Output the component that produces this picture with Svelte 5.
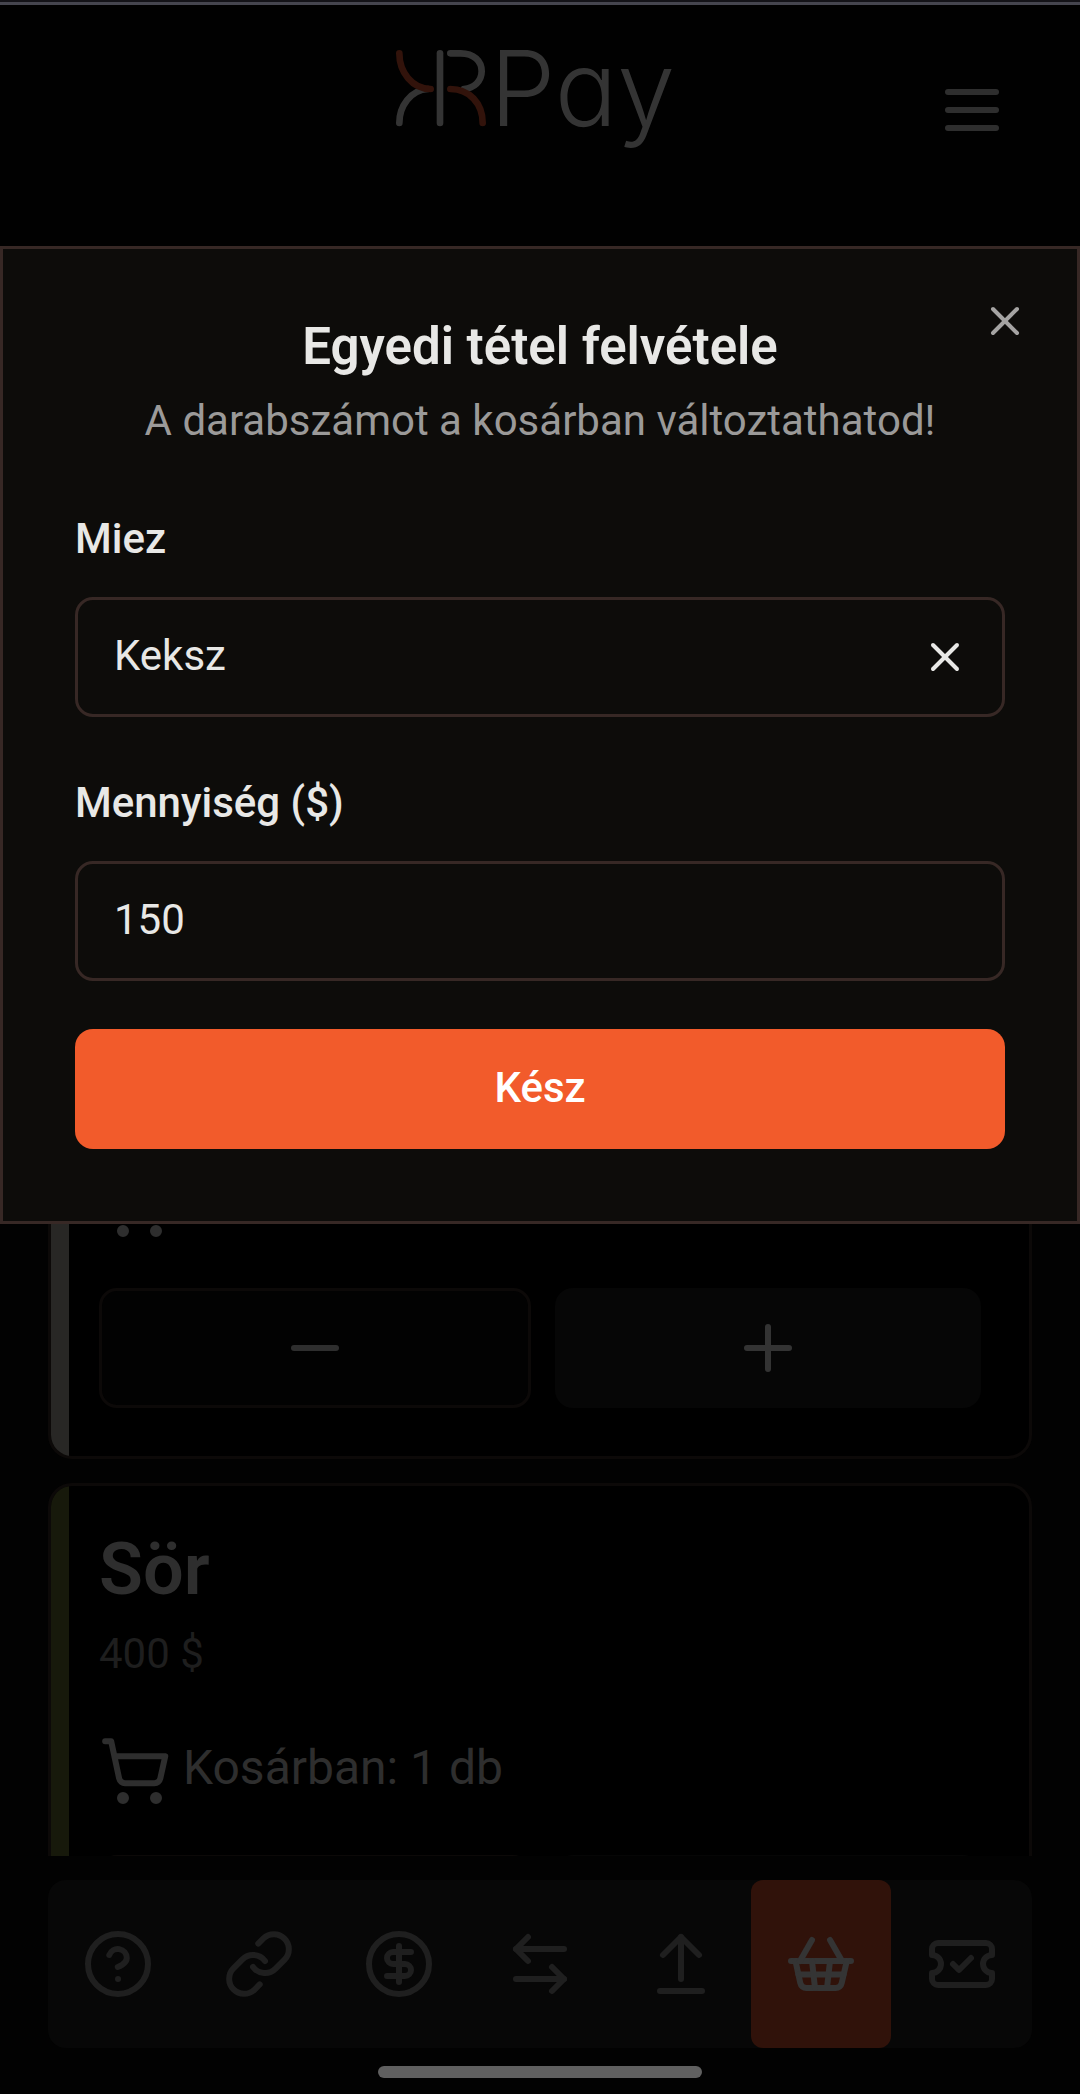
<script>
  let itemName = $state('Keksz');
  let amount = $state('150');

  const navItems = [
    {
      label: 'Súgó',
      paths: ['M2 12a10 10 0 1 0 20 0a10 10 0 1 0-20 0', 'M9.09 9a3 3 0 0 1 5.83 1c0 2-3 3-3 3', 'M12 17h.01']
    },
    {
      label: 'Összekapcsolás',
      paths: [
        'M10 13a5 5 0 0 0 7.54.54l3-3a5 5 0 0 0-7.07-7.07l-1.72 1.71',
        'M14 11a5 5 0 0 0-7.54-.54l-3 3a5 5 0 0 0 7.07 7.07l1.71-1.71'
      ]
    },
    {
      label: 'Egyenleg',
      paths: ['M2 12a10 10 0 1 0 20 0a10 10 0 1 0-20 0', 'M16 8h-6a2 2 0 1 0 0 4h4a2 2 0 1 1 0 4H8', 'M12 18V6']
    },
    { label: 'Átutalás', paths: ['M8 3 4 7l4 4', 'M4 7h16', 'm16 21 4-4-4-4', 'M20 17H4'] },
    { label: 'Feltöltés', paths: ['m18 9-6-6-6 6', 'M12 3v14', 'M5 21h14'] },
    {
      label: 'Kosár',
      active: true,
      paths: [
        'm15 11-1 9', 'm19 11-4-7', 'M2 11h20',
        'm3.5 11 1.6 7.4a2 2 0 0 0 2 1.6h9.8a2 2 0 0 0 2-1.6l1.7-7.4',
        'M4.5 15.5h15', 'm5 11 4-7', 'm9 11 1 9'
      ]
    },
    {
      label: 'Jegyek',
      paths: [
        'M2 9a3 3 0 1 1 0 6v2a2 2 0 0 0 2 2h16a2 2 0 0 0 2-2v-2a3 3 0 1 1 0-6V7a2 2 0 0 0-2-2H4a2 2 0 0 0-2 2Z',
        'm9 12 2 2 4-4'
      ]
    }
  ];
  const cart = [
    'M7 21a1 1 0 1 0 2 0a1 1 0 1 0-2 0',
    'M18 21a1 1 0 1 0 2 0a1 1 0 1 0-2 0',
    'M2.05 2.05h2l2.66 12.42a2 2 0 0 0 2 1.58h9.78a2 2 0 0 0 1.95-1.57l1.65-7.43H5.12'
  ];
  const cross = ['M18 6 6 18', 'm6 6 12 12'];
</script>

{#snippet icon(paths)}
  <svg class="icon" viewBox="0 0 24 24" aria-hidden="true">
    {#each paths as d}<path {d} />{/each}
  </svg>
{/snippet}

{#snippet stepper()}
  <div class="stepper">
    <button class="minus" type="button" aria-label="Kevesebb">{@render icon(['M5 12h14'])}</button>
    <button class="plus" type="button" aria-label="Több">{@render icon(['M5 12h14', 'M12 5v14'])}</button>
  </div>
{/snippet}

<div class="page">
  <header class="header">
    <svg class="logo" viewBox="165 147 870 297" role="img" aria-label="KRPay">
      <g class="mark">
        <path d="M178 369C178 318 212 270 264 267" />
        <path d="M300 160V369" />
        <path d="M331 160H362C402 160 425 184 425 214C425 244 402 264 372 267" />
        <path class="red" d="M178 160C178 216 216 267 272 267" />
        <path class="red" d="M331 267C388 267 428 310 428 369" />
      </g>
      <text x="450" y="377">Pay</text>
    </svg>
    <button class="menu" type="button" aria-label="Menü">
      {@render icon(['M4 6h16', 'M4 12h16', 'M4 18h16'])}
    </button>
  </header>

  <div class="dialog" role="dialog" aria-modal="true" aria-labelledby="dialog-title">
    <button class="close" type="button" aria-label="Bezárás">{@render icon(cross)}</button>
    <div class="heading">
      <h2 id="dialog-title">Egyedi tétel felvétele</h2>
      <p>A darabszámot a kosárban változtathatod!</p>
    </div>
    <form onsubmit={(e) => e.preventDefault()}>
      <div class="field">
        <label for="item-name">Miez</label>
        <div class="control">
          <input id="item-name" type="text" bind:value={itemName} />
          <button class="clear" type="button" aria-label="Törlés" onclick={() => (itemName = '')}>
            {@render icon(cross)}
          </button>
        </div>
      </div>
      <div class="field">
        <label for="item-amount">Mennyiség ($)</label>
        <div class="control">
          <input id="item-amount" type="text" inputmode="numeric" bind:value={amount} />
        </div>
      </div>
      <button class="submit" type="submit">Kész</button>
    </form>
  </div>

  <main class="list">
    <article class="card">
      <div class="in-cart">{@render icon(cart)}</div>
      {@render stepper()}
    </article>
    <article class="card beer">
      <div class="product">
        <h3>Sör</h3>
        <p>400 $</p>
      </div>
      <div class="in-cart">{@render icon(cart)}<span>Kosárban: 1 db</span></div>
      {@render stepper()}
    </article>
  </main>

  <nav class="nav">
    {#each navItems as item}
      <a href="#top" class:active={item.active} aria-label={item.label}>{@render icon(item.paths)}</a>
    {/each}
  </nav>
  <div class="home-bar"></div>
</div>

<style>
  :global(body) {
    background: #020202;
  }

  .page {
    display: flex;
    flex-direction: column;
    height: 100vh;
    overflow: hidden;
    box-sizing: border-box;
    border-top: 2px solid #141318;
    background: #020202;
    color: #e8e8e6;
    font-family: Roboto, "Liberation Sans", sans-serif;
    font-size: 42px;
    line-height: 60px;
  }

  .page :global(*) {
    box-sizing: border-box;
  }

  h2, h3, p {
    margin: 0;
  }

  button {
    padding: 0;
    border: 0;
    background: none;
    color: inherit;
    font: inherit;
    cursor: pointer;
  }

  .icon {
    display: block;
    flex: none;
    width: 72px;
    height: 72px;
    fill: none;
    stroke: currentColor;
    stroke-width: 2;
    stroke-linecap: round;
    stroke-linejoin: round;
  }

  .header {
    display: grid;
    grid-template-columns: 1fr auto 1fr;
    align-items: start;
    flex: none;
    height: 244px;
    padding: 44px 72px 0;
    border-top: 3px solid #45454e;
    background: #010101;
  }

  .logo {
    grid-column: 2;
    width: 290px;
    height: 99px;
    overflow: visible;
  }

  .mark path {
    fill: none;
    stroke: #343434;
    stroke-width: 20;
    stroke-linecap: round;
  }

  .mark .red {
    stroke: #32130b;
  }

  .logo text {
    fill: #343434;
    font-family: Inter, sans-serif;
    font-size: 312px;
    font-weight: 300;
    font-feature-settings: "cv11";
  }

  .menu {
    justify-self: end;
    margin-top: 25px;
    color: #2e2e2e;
  }

  .dialog {
    position: relative;
    z-index: 1;
    flex: none;
    padding: 72px;
    border: 3px solid #372825;
    background: #0d0c0a;
  }

  .close {
    position: absolute;
    top: 48px;
    right: 48px;
    color: #a5a4a3;
  }

  .close .icon,
  .clear .icon {
    width: 48px;
    height: 48px;
  }

  .heading {
    display: flex;
    flex-direction: column;
    gap: 18px;
    margin-bottom: 50px;
    text-align: center;
  }

  h2 {
    font-size: 51px;
    font-weight: 600;
    line-height: 52px;
  }

  .heading p {
    color: #9b9a99;
  }

  form {
    display: flex;
    flex-direction: column;
    gap: 48px;
  }

  .field {
    display: flex;
    flex-direction: column;
    gap: 20px;
  }

  label {
    font-weight: 500;
    line-height: 76px;
  }

  .control {
    display: flex;
    align-items: center;
    height: 120px;
    padding: 0 33px 0 36px;
    border: 3px solid #372825;
    border-radius: 18px;
  }

  input {
    flex: 1;
    min-width: 0;
    padding: 0 0 2px;
    border: 0;
    outline: 0;
    background: none;
    color: inherit;
    font: inherit;
  }

  .submit {
    height: 120px;
    padding-bottom: 2px;
    border-radius: 18px;
    background: #f25b2b;
    color: #fff;
    font-weight: 500;
  }

  .list {
    display: flex;
    flex-direction: column;
    flex: 1 1 0;
    gap: 24px;
    min-height: 0;
    margin-top: -107px;
    padding: 0 48px;
    overflow: hidden;
  }

  .card {
    position: relative;
    flex: none;
    padding: 48px;
    overflow: hidden;
    border: 3px solid #0c0908;
    border-radius: 24px;
    background: #000;
    color: #2e2e2e;
  }

  .card::before {
    content: "";
    position: absolute;
    top: 0;
    bottom: 0;
    left: 0;
    width: 18px;
    background: #282725;
  }

  .beer::before {
    background: #17190b;
  }

  .product {
    display: flex;
    flex-direction: column;
    gap: 18px;
    margin-bottom: 51px;
  }

  h3 {
    font-size: 72px;
    font-weight: 600;
    line-height: 72px;
  }

  .product p {
    color: #1e1e1e;
  }

  .in-cart {
    display: flex;
    gap: 12px;
    margin-bottom: 48px;
    font-size: 48px;
    line-height: 66px;
  }

  .in-cart .icon path:not(:last-child) {
    fill: currentColor;
  }

  .stepper {
    display: flex;
    gap: 24px;
  }

  .stepper button {
    display: flex;
    flex: 1;
    align-items: center;
    justify-content: center;
    height: 120px;
    border-radius: 18px;
  }

  .stepper .minus {
    border: 3px solid #0c0908;
    background: #020202;
  }

  .stepper .plus {
    background: #060606;
    color: #333;
  }

  .nav {
    display: flex;
    flex: none;
    margin: 24px 48px 18px;
    border-radius: 18px;
    background: #070707;
  }

  .nav a {
    display: flex;
    flex: 1;
    align-items: center;
    justify-content: center;
    height: 168px;
    border-radius: 12px;
    color: #1f1f1f;
  }

  .nav .active {
    background: #30120a;
    color: #343434;
  }

  .home-bar {
    flex: none;
    align-self: center;
    width: 30%;
    height: 12px;
    margin-bottom: 16px;
    border-radius: 6px;
    background: #606060;
  }
</style>
